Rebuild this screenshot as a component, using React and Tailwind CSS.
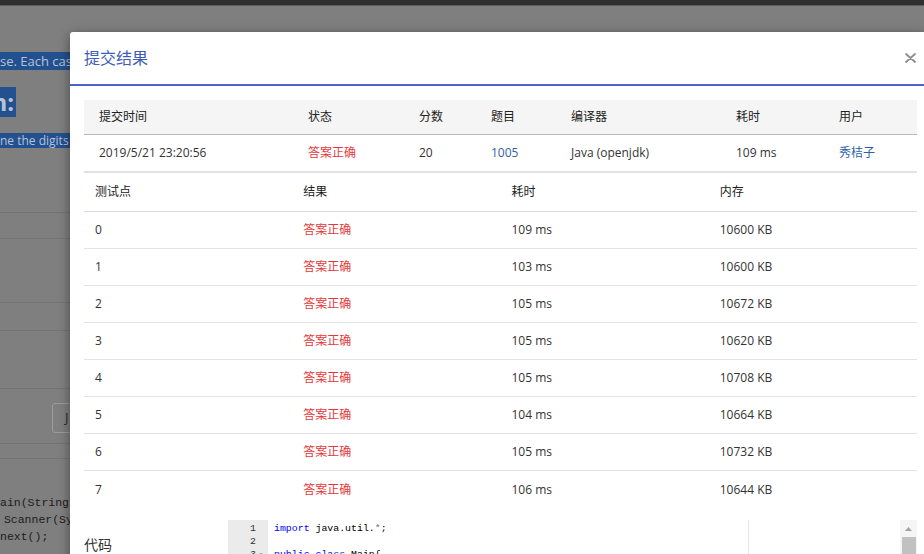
import React from "react";

const tests = [
  ["0", "109 ms", "10600 KB"],
  ["1", "103 ms", "10600 KB"],
  ["2", "105 ms", "10672 KB"],
  ["3", "105 ms", "10620 KB"],
  ["4", "105 ms", "10708 KB"],
  ["5", "104 ms", "10664 KB"],
  ["6", "105 ms", "10732 KB"],
  ["7", "106 ms", "10644 KB"],
];

function Line() {
  return <div className="h-px bg-[#747474]" />;
}

function Background() {
  return (
    <div className="flex flex-col w-[924px]">
      <div className="h-[5px] bg-[#2f2f2f]" />
      <div className="h-px bg-[#5c5c5c]" />
      <div className="h-[46px]" />
      <div className="flex h-[18px]">
        <span className="bg-[#23508f] text-[#b9c3d6] text-[13px] leading-[18px] whitespace-nowrap pr-2 font-['Open_Sans',sans-serif]">
          se. Each case is given in a line
        </span>
      </div>
      <div className="h-[17px]" />
      <div className="flex h-[30px]">
        <span className="bg-[#23508f] text-[#b9c3d6] text-[24px] leading-[30px] font-bold whitespace-nowrap w-[16px] overflow-hidden flex justify-end pr-[2px] font-['Open_Sans',sans-serif]">
          n:
        </span>
      </div>
      <div className="h-[16px]" />
      <div className="flex h-[15px]">
        <span className="bg-[#23508f] text-[#b9c3d6] text-[12px] leading-[15px] whitespace-nowrap pr-2 font-['Open_Sans',sans-serif]">
          ne the digits of N in English
        </span>
      </div>
      <div className="h-[64px]" />
      <Line />
      <div className="h-[25px]" />
      <Line />
      <div className="h-[63px]" />
      <Line />
      <div className="h-[27px]" />
      <Line />
      <div className="h-[57px]" />
      <Line />
      <div className="h-[14px]" />
      <div className="flex h-[30px]">
        <div className="ml-[52px] w-[60px] h-[30px] border border-[#9c9c9c] rounded-[3px] flex items-center pl-[12px] text-[#2a2a2a] text-[13px] font-['Open_Sans',sans-serif]">
          J
        </div>
      </div>
      <div className="h-[10px]" />
      <Line />
      <div className="h-[14px]" />
      <Line />
      <div className="h-[35px]" />
      <div className="flex flex-col font-['Liberation_Mono',monospace] text-[11.5px] leading-[17px] text-[#1c1c1c] whitespace-pre">
        <div>ain(String[] args) {"{"}</div>
        <div className="ml-[-3px]"> Scanner(System.in);</div>
        <div>next();</div>
      </div>
    </div>
  );
}

function CloseIcon() {
  return (
    <svg width="11" height="10" viewBox="0 0 11 10" className="block">
      <path d="M1 1 L10 9 M10 1 L1 9" stroke="#8d8d8d" strokeWidth="1.8" strokeLinecap="round" />
    </svg>
  );
}

export default function App() {
  const red = "text-[#e4393c]";
  return (
    <div className="relative w-[924px] h-[554px] overflow-hidden bg-[#7f7f7f] font-['Open_Sans','Noto_Sans_CJK_SC',sans-serif]">
      <Background />

      <div className="absolute left-[70px] top-[32px] w-[861px] h-[560px] bg-white rounded-[3px] shadow-[0_3px_12px_rgba(0,0,0,0.45)] flex flex-col">
        {/* header */}
        <div className="h-[54px] shrink-0 flex items-center justify-between pl-[14px] pr-[15px] border-b-2 border-[#4a64c8]">
          <div className="text-[16px] text-[#3f5db8] leading-none">提交结果</div>
          <CloseIcon />
        </div>

        {/* body */}
        <div className="px-[14px] pt-[14px] flex flex-col text-[12px] text-[#333]">
          {/* submission table */}
          <div className="grid grid-cols-[209px_111px_72px_80px_165px_103px_93px] h-[35px] items-center bg-[#f5f5f5] border-b border-[#b9b9b9] text-[#222]">
            <div className="pl-[15px]">提交时间</div>
            <div className="pl-[15px]">状态</div>
            <div className="pl-[15px]">分数</div>
            <div className="pl-[15px]">题目</div>
            <div className="pl-[15px]">编译器</div>
            <div className="pl-[15px]">耗时</div>
            <div className="pl-[15px]">用户</div>
          </div>
          <div className="grid grid-cols-[209px_111px_72px_80px_165px_103px_93px] h-[38px] items-center border-b-2 border-[#e2e2e2]">
            <div className="pl-[15px]">2019/5/21 23:20:56</div>
            <div className={`pl-[15px] ${red}`}>答案正确</div>
            <div className="pl-[15px]">20</div>
            <div className="pl-[15px] text-[#2d5fa6]">1005</div>
            <div className="pl-[15px]">Java (openjdk)</div>
            <div className="pl-[15px]">109 ms</div>
            <div className="pl-[15px] text-[#2d5fa6]">秀桔子</div>
          </div>

          {/* test points table */}
          <div className="grid grid-cols-4 h-[39px] items-center border-b border-[#dadada] text-[#222]">
            <div className="pl-[11px]">测试点</div>
            <div className="pl-[11px]">结果</div>
            <div className="pl-[11px]">耗时</div>
            <div className="pl-[11px]">内存</div>
          </div>
          {tests.map(([id, t, m], i) => (
            <div
              key={id}
              className={`grid grid-cols-4 h-[37px] items-center ${i < tests.length - 1 ? "border-b border-[#e3e3e3]" : ""}`}
            >
              <div className="pl-[11px]">{id}</div>
              <div className={`pl-[11px] ${red}`}>答案正确</div>
              <div className="pl-[11px]">{t}</div>
              <div className="pl-[11px]">{m}</div>
            </div>
          ))}

          {/* code */}
          <div className="flex mt-[12px]">
            <div className="w-[144px] shrink-0 pt-[16px] text-[14px] text-[#333] leading-[18px]">代码</div>
            <div className="relative flex-1 flex h-[60px]">
              <div className="w-[40px] shrink-0 bg-[#ebebeb] pt-[2px] font-['Liberation_Mono',monospace] text-[9.9px] leading-[13px] text-[#333] flex flex-col items-end">
                <div className="pr-[12px]">1</div>
                <div className="pr-[12px]">2</div>
                <div className="flex pr-[2px]">
                  <span>3</span>
                  <span className="w-[10px] text-center text-[#777] text-[8px]">▾</span>
                </div>
              </div>
              <div className="flex-1 pl-[6px] pt-[2px] font-['Liberation_Mono',monospace] text-[9.9px] leading-[13px] text-black whitespace-pre">
                <div>
                  <span className="text-[#0000ff]">import</span> java.util.<span className="text-[#687687]">*</span>;
                </div>
                <div> </div>
                <div>
                  <span className="text-[#0000ff]">public</span> <span className="text-[#0000ff]">class</span> Main{"{"}
                </div>
              </div>
              <div className="absolute top-0 bottom-0 left-[520px] w-px bg-[#e6e6e6]" />
              <div className="w-[17px] shrink-0 bg-[#f5f5f5] flex flex-col items-center">
                <div className="h-[17px] flex items-center justify-center">
                  <svg width="7" height="4" viewBox="0 0 7 4">
                    <path d="M0 4 L3.5 0 L7 4 Z" fill="#a3a3a3" />
                  </svg>
                </div>
                <div className="w-[14px] flex-1 bg-[#c1c1c1]" />
              </div>
            </div>
          </div>
        </div>
      </div>
    </div>
  );
}
